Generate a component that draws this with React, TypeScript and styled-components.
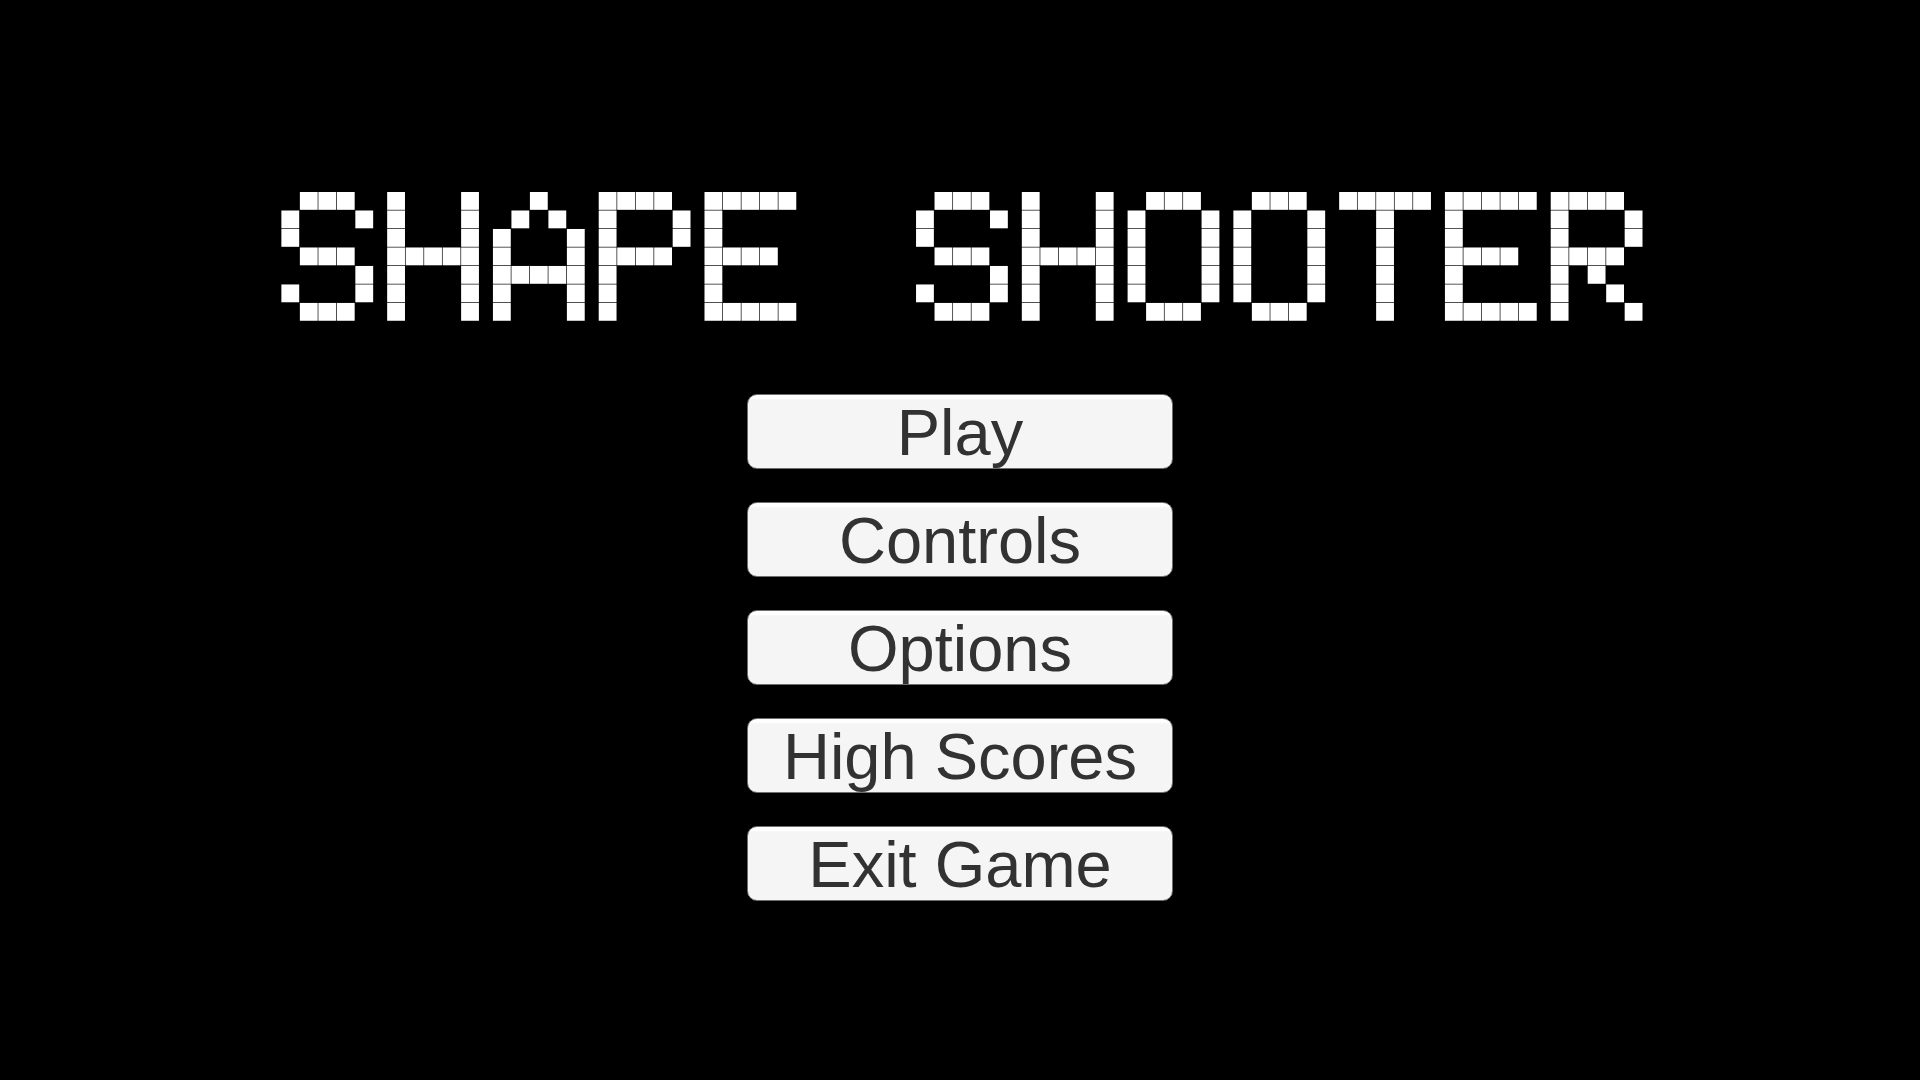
import React from "react";
import styled, { createGlobalStyle } from "styled-components";

const GlobalStyle = createGlobalStyle`
  *, *::before, *::after { box-sizing: border-box; }
  body {
    margin: 0;
    background: #000;
    font-family: "Liberation Sans", Arial, sans-serif;
  }
`;

const Screen = styled.main`
  display: flex;
  flex-direction: column;
  align-items: center;
  gap: 73px;
  min-height: 100vh;
  padding: 192px 24px 48px;
  background: #000;
`;

const Title = styled.h1`
  display: flex;
  justify-content: center;
  width: 100%;
  margin: 0;
`;

const Logo = styled.svg`
  display: block;
  width: 73%;
  height: auto;
  fill: #fff;
`;

const Menu = styled.nav`
  display: flex;
  flex-direction: column;
  gap: 33px;
  width: 426px;
  max-width: 100%;
`;

const MenuButton = styled.button`
  display: flex;
  align-items: center;
  justify-content: center;
  height: 75px;
  padding: 2px 0 0;
  border: 1px solid #6e6e6e;
  border-radius: 10px;
  background: linear-gradient(#fff 3px, #f5f5f5 5px);
  color: #323232;
  font-family: inherit;
  font-size: 65px;
  line-height: 71px;
  white-space: nowrap;
  cursor: pointer;

  &:hover { background: #f5f5f5; }
  &:active { background: #c8c8c8; }
`;

// Each letter is a 5 x 7 arrangement of bricks.
const BRICKS: Record<string, string[]> = {
  S: [".###.", "#...#", "#....", ".###.", "....#", "#...#", ".###."],
  H: ["#...#", "#...#", "#...#", "#####", "#...#", "#...#", "#...#"],
  A: ["..#..", ".#.#.", "#...#", "#...#", "#####", "#...#", "#...#"],
  P: ["####.", "#...#", "#...#", "####.", "#....", "#....", "#...."],
  E: ["#####", "#....", "#....", "####.", "#....", "#....", "#####"],
  O: [".###.", "#...#", "#...#", "#...#", "#...#", "#...#", ".###."],
  T: ["#####", "..#..", "..#..", "..#..", "..#..", "..#..", "..#.."],
  R: ["####.", "#...#", "#...#", "####.", "#.#..", "#..#.", "#...#"],
};

const BRICK = 107;
const STEP = 111;
const ADVANCE = 635;
const BEARING_LEFT = 26;
const BEARING_RIGHT = 6;

function BrickLogo({ name }: { name: string }) {
  const letters = name.toUpperCase().split("");
  const inkWidth = (letters.length - 1) * ADVANCE + 4 * STEP + BRICK;
  const width = BEARING_LEFT + inkWidth + BEARING_RIGHT;
  const height = 6 * STEP + BRICK;
  return (
    <Logo
      role="img"
      aria-label={name}
      viewBox={`${-BEARING_LEFT} 0 ${width} ${height}`}
    >
      {letters.map((letter, i) =>
        (BRICKS[letter] ?? []).map((row, y) =>
          row.split("").map((cell, x) =>
            cell === "#" ? (
              <rect
                key={`${i}-${y}-${x}`}
                x={i * ADVANCE + x * STEP}
                y={y * STEP}
                width={BRICK}
                height={BRICK}
              />
            ) : null
          )
        )
      )}
    </Logo>
  );
}

const ITEMS = ["Play", "Controls", "Options", "High Scores", "Exit Game"];

export default function App() {
  return (
    <>
      <GlobalStyle />
      <Screen>
        <Title>
          <BrickLogo name="Shape Shooter" />
        </Title>
        <Menu aria-label="Main menu">
          {ITEMS.map((item) => (
            <MenuButton key={item} type="button">
              {item}
            </MenuButton>
          ))}
        </Menu>
      </Screen>
    </>
  );
}
